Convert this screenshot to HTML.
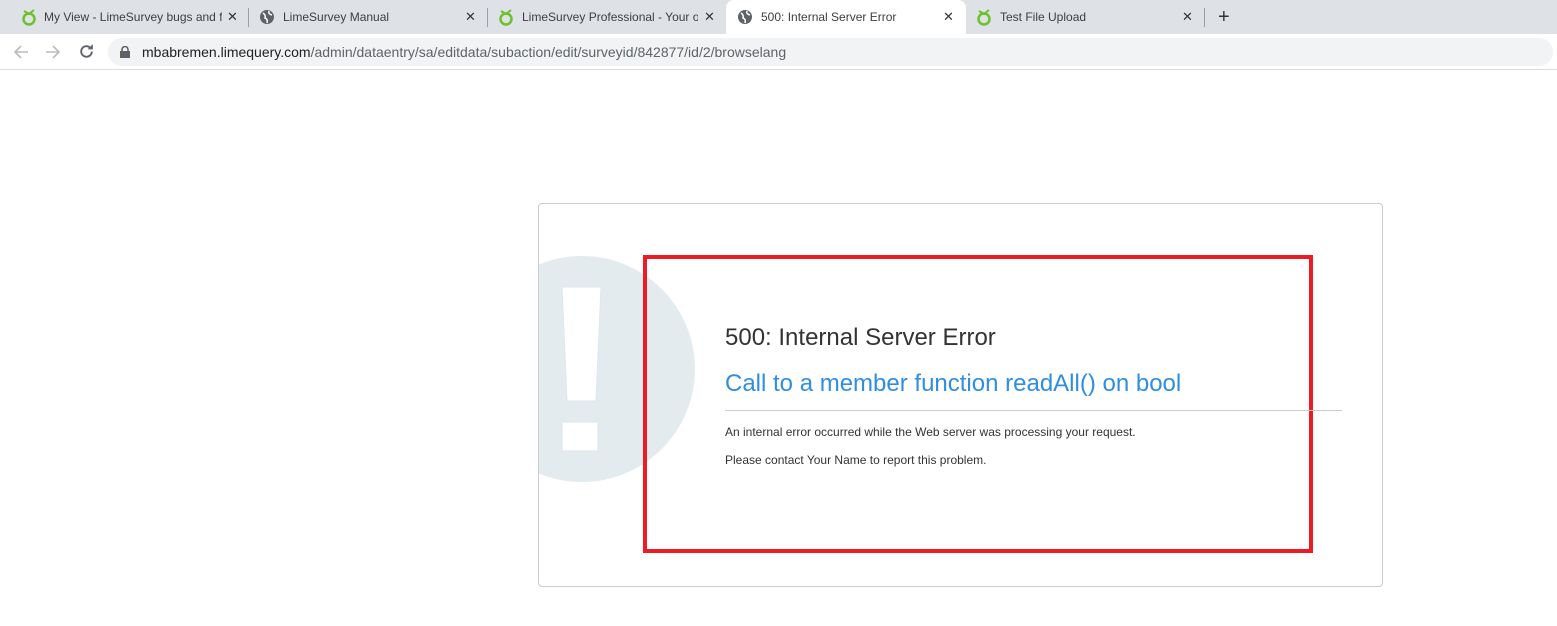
<!DOCTYPE html>
<html><head><meta charset="utf-8"><style>
*{margin:0;padding:0;box-sizing:border-box}
body{width:1557px;height:626px;background:#fff;font-family:"Liberation Sans",sans-serif;position:relative;overflow:hidden}
.tabbar{position:absolute;left:0;top:0;width:1557px;height:34px;background:#dee1e6}
.tab{position:absolute;top:0;height:34px;font-size:12px;color:#3c4043;line-height:34px;white-space:nowrap}
.tab .t{position:absolute;left:44px;top:0;overflow:hidden;width:170px}
.tab .x{position:absolute;top:0;font-size:13px;color:#333}
.sep{position:absolute;top:8px;width:1px;height:19px;background:#9aa0a6}
.active{background:#fff;border-radius:8px 8px 0 0}
.toolbar{position:absolute;left:0;top:34px;width:1557px;height:36px;background:#fff;border-bottom:1px solid #dadce0}
.url{position:absolute;left:108px;top:4px;width:1445px;height:28px;background:#f1f3f4;border-radius:14px;font-size:14px;line-height:28px;color:#5f6368;padding-left:34px}
.url b{font-weight:normal;color:#202124}
.card{position:absolute;left:538px;top:203px;width:845px;height:384px;border:1px solid #ccc;border-radius:4px;overflow:hidden;background:#fff}
.circle{position:absolute;left:-70px;top:52px;width:226px;height:226px;border-radius:50%;background:#e4ebef}
.red{position:absolute;left:643px;top:255px;width:670px;height:298px;border:4px solid #ed1c24}
h1{position:absolute;left:725px;top:324px;font-size:24px;font-weight:normal;color:#333}
h2{position:absolute;left:725px;top:370px;font-size:24px;font-weight:normal;color:#2f8ee0}
.hr{position:absolute;left:725px;top:410px;width:617px;height:1px;background:#ccc}
p{position:absolute;left:725px;font-size:12px;color:#333}
</style></head><body>
<div class="tabbar">
 <div class="tab" style="left:8px;width:236px"><svg style="position:absolute;left:13px;top:9px" width="16" height="17" viewBox="0 0 16 17"><circle cx="8" cy="10" r="5.5" fill="none" stroke="#6cc12c" stroke-width="2.5"/><path d="M3 2 L8 5 L13 1" stroke="#6cc12c" stroke-width="2" fill="none"/></svg><span class="t" style="left:36px;width:178px">My View - LimeSurvey bugs and f</span><span class="x" style="left:219px">✕</span></div>
 <div class="sep" style="left:248px"></div>
 <div class="tab" style="left:248px;width:238px"><svg style="position:absolute;left:12px;top:10px" width="14" height="14" viewBox="0 0 14 14"><circle cx="7" cy="7" r="7" fill="#5f6368"/><path d="M3 3 Q6 5 5 8 Q8 9 7 13 M9 1 Q8 4 12 5" stroke="#fff" stroke-width="1.5" fill="none"/></svg><span class="t" style="left:35px">LimeSurvey Manual</span><span class="x" style="left:217px">✕</span></div>
 <div class="sep" style="left:487px"></div>
 <div class="tab" style="left:487px;width:238px"><svg style="position:absolute;left:11px;top:9px" width="16" height="17" viewBox="0 0 16 17"><circle cx="8" cy="10" r="5.5" fill="none" stroke="#6cc12c" stroke-width="2.5"/><path d="M3 2 L8 5 L13 1" stroke="#6cc12c" stroke-width="2" fill="none"/></svg><span class="t" style="left:35px;width:176px">LimeSurvey Professional - Your o</span><span class="x" style="left:217px">✕</span></div>
 <div class="tab active" style="left:726px;width:240px"><svg style="position:absolute;left:12px;top:10px" width="14" height="14" viewBox="0 0 14 14"><circle cx="7" cy="7" r="7" fill="#5f6368"/><path d="M3 3 Q6 5 5 8 Q8 9 7 13 M9 1 Q8 4 12 5" stroke="#fff" stroke-width="1.5" fill="none"/></svg><span class="t" style="left:35px">500: Internal Server Error</span><span class="x" style="left:217px">✕</span></div>
 <div class="tab" style="left:966px;width:238px"><svg style="position:absolute;left:10px;top:9px" width="16" height="17" viewBox="0 0 16 17"><circle cx="8" cy="10" r="5.5" fill="none" stroke="#6cc12c" stroke-width="2.5"/><path d="M3 2 L8 5 L13 1" stroke="#6cc12c" stroke-width="2" fill="none"/></svg><span class="t" style="left:34px">Test File Upload</span><span class="x" style="left:216px">✕</span></div>
 <div class="sep" style="left:1204px"></div>
 <div class="tab" style="left:1218px;font-size:20px;color:#333">+</div>
</div>
<div class="toolbar">
 <svg style="position:absolute;left:13px;top:10px" width="16" height="16" viewBox="0 0 16 16"><path d="M15 8H2M8 2L2 8l6 6" stroke="#bbb" stroke-width="1.6" fill="none"/></svg>
 <svg style="position:absolute;left:45px;top:10px" width="16" height="16" viewBox="0 0 16 16"><path d="M1 8h13M8 2l6 6-6 6" stroke="#bbb" stroke-width="1.6" fill="none"/></svg>
 <svg style="position:absolute;left:78px;top:9px" width="17" height="17" viewBox="0 0 16 16"><path d="M13 8a5 5 0 1 1-1.5-3.6" stroke="#5f6368" stroke-width="1.8" fill="none"/><path d="M14 1v5h-5z" fill="#5f6368"/></svg>
 <div class="url"><svg style="position:absolute;left:12px;top:8px" width="10" height="12" viewBox="0 0 10 12"><rect x="0" y="5" width="10" height="7" fill="#5f6368"/><path d="M2 5V3.5a3 3 0 0 1 6 0V5" stroke="#5f6368" stroke-width="1.6" fill="none"/></svg><b>mbabremen.limequery.com</b>/admin/dataentry/sa/editdata/subaction/edit/surveyid/842877/id/2/browselang</div>
</div>
<div class="card">
 <div class="circle"></div>
 <svg style="position:absolute;left:22px;top:82px" width="42" height="168" viewBox="0 0 42 168"><path d="M1 1H40L35 115H6Z" fill="#fff" stroke="#dde6ee"/><rect x="1" y="136" width="36" height="29" fill="#fff" stroke="#dde6ee"/></svg>
</div>
<div class="red"></div>
<h1>500: Internal Server Error</h1>
<h2>Call to a member function readAll() on bool</h2>
<div class="hr"></div>
<p style="top:425px">An internal error occurred while the Web server was processing your request.</p>
<p style="top:453px">Please contact Your Name to report this problem.</p>
</body></html>
